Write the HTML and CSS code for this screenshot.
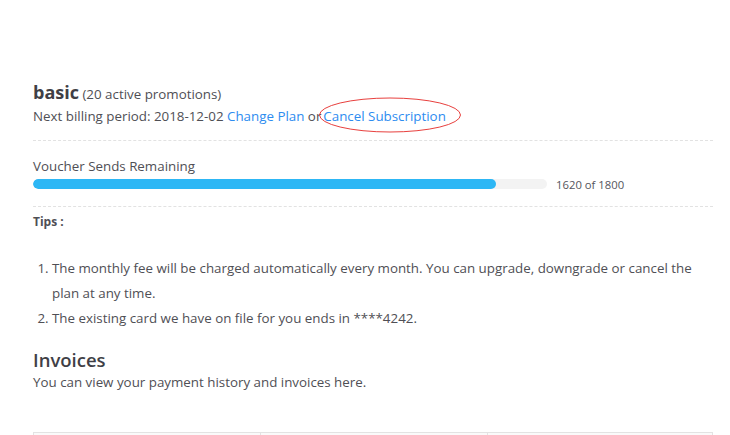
FILE: index.html
```html
<!DOCTYPE html>
<html>
<head>
<meta charset="utf-8">
<link rel="stylesheet" href="styles.css">
</head>
<body>
<div class="page">
  <section class="plan">
    <div class="plan-title"><span class="plan-name">basic</span> <span class="plan-count">(20 active promotions)</span></div>
    <div class="plan-billing">Next billing period: 2018-12-02 <a class="link">Change Plan</a> or<span class="cancel-wrap"><a class="link">Cancel Subscription</a><svg class="annot" width="144" height="38" viewBox="0 0 144 38"><ellipse cx="72" cy="19" rx="70.5" ry="17" fill="none" stroke="#e8403e" stroke-width="1"/></svg></span></div>
  </section>
  <section class="usage">
    <div class="usage-label">Voucher Sends Remaining</div>
    <div class="progress">
      <div class="progress-track"><div class="progress-fill" style="width:90%"></div></div>
      <span class="progress-text">1620 of 1800</span>
    </div>
  </section>
  <section class="tips">
    <div class="tips-title">Tips :</div>
    <ol class="tips-list">
      <li>The monthly fee will be charged automatically every month. You can upgrade, downgrade or cancel the plan at any time.</li>
      <li>The existing card we have on file for you ends in ****4242.</li>
    </ol>
  </section>
  <section class="invoices">
    <h2 class="invoices-title">Invoices</h2>
    <div class="invoices-sub">You can view your payment history and invoices here.</div>
    <div class="table">
      <div class="cell"></div><div class="cell"></div><div class="cell"></div>
    </div>
  </section>
</div>
</body>
</html>
```
FILE: styles.css
```css
html, body { margin: 0; padding: 0; background: #fff; }
body { font-family: "Open Sans", "Noto Sans", sans-serif; color: #4f4f55; font-size: 13.35px; overflow: hidden; height: 435px; }
.page { padding: 81px 17px 0 33px; }
.plan { padding-bottom: 14px; border-bottom: 1px dashed #e2e2e2; }
.plan-title { line-height: 23px; }
.plan-name { font-size: 18px; font-weight: 700; color: #3f3f46; }
.plan-count { font-size: 13.35px; }
.plan-billing { line-height: 20px; }
.link { color: #2d8cf0; text-decoration: none; }
.cancel-wrap { position: relative; margin-left: 2px; }
.annot { position: absolute; left: -5px; top: -11px; }
.usage { padding: 16px 0 14px; border-bottom: 1px dashed #e2e2e2; }
.usage-label { line-height: 19px; }
.progress { display: flex; align-items: center; height: 16px; }
.progress-track { width: 514px; height: 10px; background: #f3f3f3; border-radius: 5px; overflow: hidden; }
.progress-fill { height: 100%; background: #2db7f5; border-radius: 5px; }
.progress-text { margin-left: 9px; font-size: 11.3px; color: #55555c; }
.tips-title { font-weight: 700; font-size: 12px; line-height: 16px; margin-top: 7px; }
.tips-list { margin: 26px 0 0; padding-left: 19px; line-height: 25px; }
.invoices-title { font-size: 18.5px; font-weight: 600; margin: 17px 0 0; line-height: 24px; color: #3f3f46; }
.invoices-sub { line-height: 20px; }
.table { margin-top: 40px; display: grid; grid-template-columns: 226px 227px 227px; border: 1px solid #e3e3e3; border-bottom: 0; height: 3px; width: 680px; box-sizing: border-box; background: #fafafa; }
.cell + .cell { border-left: 1px solid #e3e3e3; }
```
